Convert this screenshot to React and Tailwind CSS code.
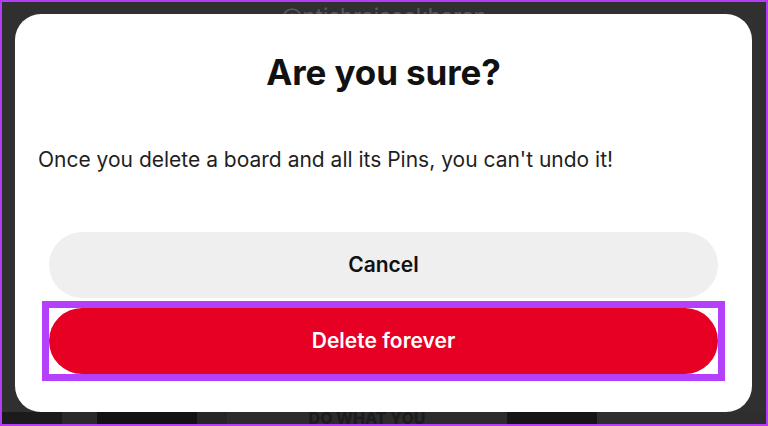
import React from 'react';

const App = () => {
  return (
    <div className="relative w-[768px] h-[426px] overflow-hidden border-2 border-[#b23ff7] bg-[#303030] font-['Inter','Liberation_Sans',sans-serif]">
      {/* page behind the dialog */}
      <div className="flex h-full flex-col">
        <div className="flex justify-center pt-[1px]">
          <span className="text-[22px] leading-[26px] text-[#5a5a5a]">@ptishrajasekharan</span>
        </div>
        <div className="flex-1" />
        <div className="flex h-[12px] bg-[#232323]">
          <div className="w-[60px] bg-[#1b1b1b]" />
          <div className="w-[35px] bg-[#2a2a2a]" />
          <div className="w-[100px] bg-[#121212]" />
          <div className="w-[30px] bg-[#262626]" />
          <div className="w-[280px] flex items-start justify-center bg-[#2c2c2c]">
            <span className="text-[16px] leading-[12px] font-extrabold text-[#1c1c1c]">DO WHAT YOU</span>
          </div>
          <div className="w-[90px] bg-[#151515]" />
          <div className="flex-1 bg-[#2e2e2e]" />
        </div>
      </div>

      {/* dialog */}
      <div className="absolute left-[13px] top-[12px] flex h-[398px] w-[737px] flex-col rounded-[26px] bg-white">
        <h1 className="mt-[38px] text-center text-[35px] font-bold leading-[40px] tracking-[-0.1px] text-[#111]">
          Are you sure?
        </h1>
        <p className="mt-[55px] pl-[23px] text-[21px] leading-[26px] text-[#1f1f1f]">
          Once you delete a board and all its Pins, you can't undo it!
        </p>
        <div className="mt-[59px] flex flex-col px-[27px]">
          <button className="mx-[7px] h-[66px] rounded-full bg-[#efefef] text-[21px] font-semibold text-[#111]">
            Cancel
          </button>
          <div className="mt-[3px] border-[7px] border-[#b440fb] bg-white">
            <button className="block h-[66px] w-full rounded-full bg-[#e60023] text-[21px] font-semibold text-white">
              Delete forever
            </button>
          </div>
        </div>
      </div>
    </div>
  );
};

export default App;
